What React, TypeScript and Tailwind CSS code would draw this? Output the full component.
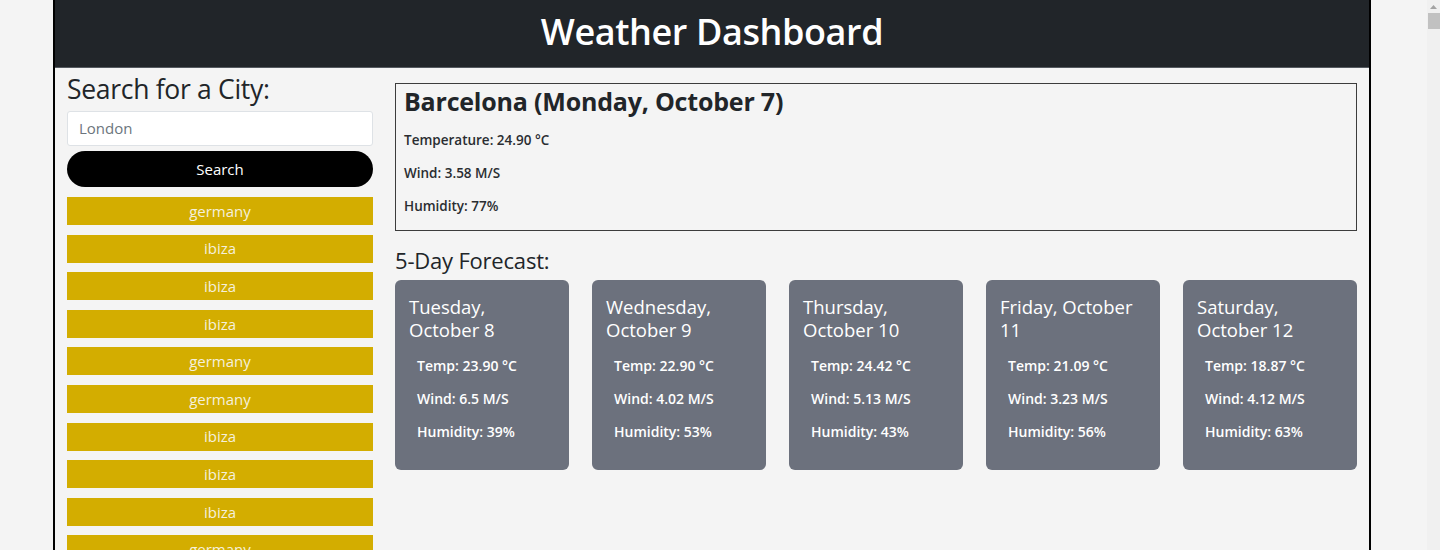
import React from "react";

const history = ["germany", "ibiza", "ibiza", "ibiza", "germany", "germany", "ibiza", "ibiza", "ibiza", "germany"];

const forecast = [
  { date: "Tuesday, October 8", temp: "23.90", wind: "6.5", hum: "39" },
  { date: "Wednesday, October 9", temp: "22.90", wind: "4.02", hum: "53" },
  { date: "Thursday, October 10", temp: "24.42", wind: "5.13", hum: "43" },
  { date: "Friday, October 11", temp: "21.09", wind: "3.23", hum: "56" },
  { date: "Saturday, October 12", temp: "18.87", wind: "4.12", hum: "63" },
];

export default function App() {
  return (
    <div
      className="flex h-[550px] w-[1440px] overflow-hidden bg-[#f4f4f4] text-[#212529]"
      style={{ fontFamily: '"Open Sans", "Noto Sans", sans-serif' }}
    >
      <div className="flex-1">
        <div className="ml-[53px] h-[550px] w-[1318px] border-x-2 border-black">
          <header className="flex h-[68px] items-center justify-center border-b border-[#555a60] bg-[#212529] pb-[3px]">
            <h1 className="text-[36px] font-semibold leading-none tracking-[-0.4px] text-white">Weather Dashboard</h1>
          </header>
          <div className="flex gap-[22px] px-[12px]">
            <aside className="w-[306px] shrink-0 pt-[4px]">
              <h2 className="text-[26.5px] leading-[34px] tracking-[-0.3px]">Search for a City:</h2>
              <div className="mt-[5px] flex h-[35px] items-center rounded-[3px] border border-[#dee2e6] bg-white px-[11px] text-[15px] text-[#6c757d]">
                London
              </div>
              <div className="mt-[5px] flex h-[36px] items-center justify-center rounded-full bg-black text-[15px] text-white">
                Search
              </div>
              <div className="mt-[10px] flex flex-col gap-[9.6px]">
                {history.map((c, i) => (
                  <div
                    key={i}
                    className="flex h-[28px] shrink-0 items-center justify-center bg-[#d3ad00] text-[15px] text-[#f5f0dc]"
                  >
                    {c}
                  </div>
                ))}
              </div>
            </aside>
            <main className="flex-1 pt-[15px]">
              <section className="border border-[#3c3c3c] px-[8px] pb-[13px]">
                <h2 className="text-[25px] font-bold leading-[34px] tracking-[-0.2px]">Barcelona (Monday, October 7)</h2>
                <div className="mt-[11px] flex flex-col gap-[11px] text-[13.5px] font-semibold leading-[22px] text-[#2a2d31]">
                  <p>Temperature: 24.90 °C</p>
                  <p>Wind: 3.58 M/S</p>
                  <p>Humidity: 77%</p>
                </div>
              </section>
              <h3 className="mt-[14px] text-[22px] leading-[30px] tracking-[-0.2px]">5-Day Forecast:</h3>
              <div className="mt-[5px] grid grid-cols-5 gap-[23px]">
                {forecast.map((f) => (
                  <div key={f.date} className="h-[190px] rounded-[6px] bg-[#6c717d] pl-[14px] pr-[12px] pt-[15px] text-white">
                    <h4 className="text-[18.5px] leading-[23px]">{f.date}</h4>
                    <div className="mt-[14px] flex flex-col gap-[11px] pl-[8px] text-[14px] font-semibold leading-[22px]">
                      <p>Temp: {f.temp} °C</p>
                      <p>Wind: {f.wind} M/S</p>
                      <p>Humidity: {f.hum}%</p>
                    </div>
                  </div>
                ))}
              </div>
            </main>
          </div>
        </div>
      </div>
      <div className="flex w-[13px] flex-col items-center bg-[#f0f0f0]">
        <svg width="9" height="8" viewBox="0 0 9 8" className="mt-[3px]">
          <path d="M4.5 2 L8 6 L1 6 Z" fill="#a3a3a3" />
        </svg>
        <div className="mt-[2px] h-[16px] w-[12px] self-end bg-[#c1c1c1]" />
      </div>
    </div>
  );
}
